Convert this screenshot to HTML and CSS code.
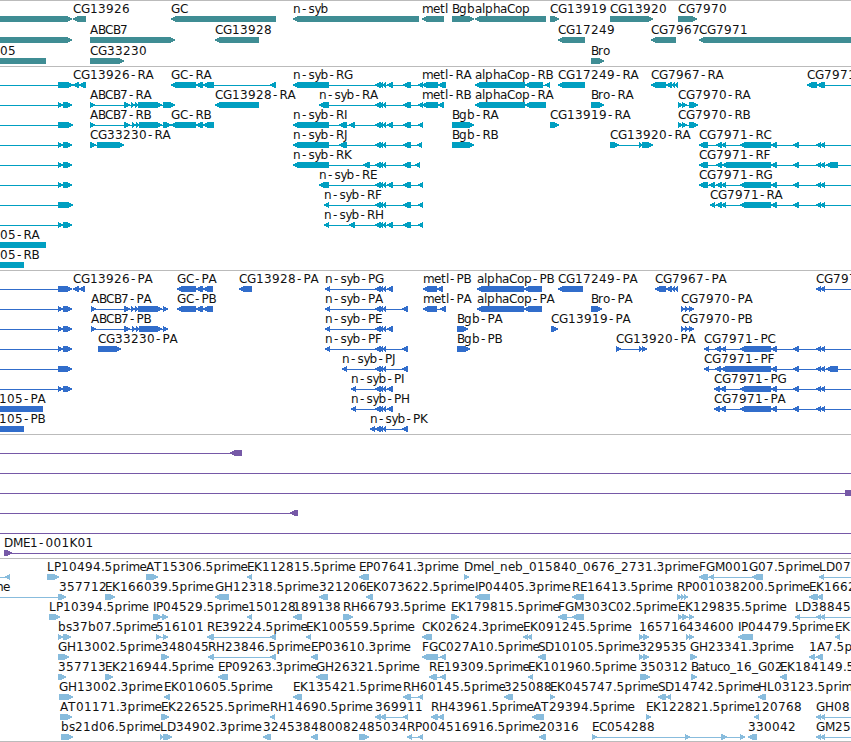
FILE: index.html
```html
<!DOCTYPE html>
<html lang="en">
<head>
  <meta charset="UTF-8">
  <title>Genome Browser</title>
  <link rel="stylesheet" href="styles.css">
</head>
<body>
  <main class="browser">
    <section class="track genes" id="genes"></section>
    <section class="track transcripts" id="transcripts"></section>
    <section class="track proteins" id="proteins"></section>
    <section class="track clones" id="clones"></section>
    <section class="track ests" id="ests"></section>
  </main>
  <script src="tracks.js"></script>
</body>
</html>
```
FILE: styles.css
```css
body {
  margin: 0;
  background: #fff;
  overflow: hidden;
}

.browser {
  display: flex;
  flex-direction: column;
  width: 851px;
  height: 741px;
  border-bottom: 1px solid #bbb;
}

.track {
  border-top: 1px solid #bbb;
  padding: 1px 0 2px;
}

.track svg {
  display: block;
  width: 851px;
  height: 20px;
  overflow: visible;
}

.track text {
  font-family: "DejaVu Sans", sans-serif;
  font-size: 12px;
  fill: #111;
}

.track path {
  shape-rendering: crispEdges;
}

.genes {
  color: #3f8d94;
  padding-top: 0;
}

.genes svg {
  height: 21px;
}

.transcripts {
  color: #009fc1;
}

.proteins {
  color: #316dcb;
}

.clones {
  color: #7659a7;
}

.ests {
  color: #88bcdd;
  padding-bottom: 1px;
}

.shape {
  fill: currentColor;
}
```
FILE: tracks.js
```js
// one string per row, features split by ";"
// feature: label direction exons   ("." = no label, "=" = plain bar, "~" = line only)
const FULL = '. > -20,-10 58,73';
const SPLIT = '. > -20,-10 58,63 63,72';
const CL = '375,381 379,383 382,386';
const CG_END = '771,777 793,799 816,821 820,825';

const tracks = {
  genes: [
    `. > -20,72; CG13926 < 73,86; GC < 171,276; n-syb < 293,419; metl < 422,444; Bgb > 452,474; alphaCop < 475,546; CG13919 > 550,559; CG13920 > 610,653; CG7970 > 678,697`,
    `. > -20,72; ABCB7 > 90,175; CG13928 < 215,259; CG17249 < 558,585; CG7967 < 651,676; CG7971 < 699,870`,
    `05@0 = -20,46; CG33230 > 90,124; Bro > 591,604`
  ],
  transcripts: [
    `${FULL}; CG13926-RA < 73,79 79,86; GC-RA < 171,196 196,203 203,214 270,276; n-syb-RG < 293,329 ${CL} 387,393 403,411 418,423; metl-RA < 422,438 438,446; alphaCop-RB < 475,525 525,543 545,550; CG17249-RA < 558,585; CG7967-RA < 651,666 666,672 671,675 674,678; CG7971-RD < 807,817 817,825 870,880`,
    `${SPLIT}; ABCB7-RA > 90,95 124,130 131,135 135,139 138,162 163,175; CG13928-RA < 215,259; n-syb-RA < 319,329 ${CL} 403,411 418,423; metl-RB < 422,438 438,444; alphaCop-RA < 475,525 525,546; Bro-RA > 591,604; CG7970-RA > 678,683 682,687 689,698`,
    `${FULL}; ABCB7-RB > 90,95 124,130 132,136 136,139 139,162 163,171; GC-RB < 171,196 196,203 203,214; n-syb-RI < 293,329 339,347 349,355 ${CL} 387,393 403,411 418,423; Bgb-RA > 452,474; CG13919-RA > 550,559; CG7970-RB > 678,683 682,687 689,698`,
    `${SPLIT}; CG33230-RA > 90,96 97,124; n-syb-RJ < 293,329 339,347 ${CL} 403,411 417,422; Bgb-RB > 452,474; CG13920-RA > 610,619 639,643 642,653; CG7971-RC < 699,708 716,722 721,726 740,771 ${CG_END} 870,880`,
    `${SPLIT}; n-syb-RK < 293,329 363,370 ${CL} 403,411 415,420; CG7971-RF < 699,708 716,722 722,771 ${CG_END} 826,838 870,880`,
    `${SPLIT}; n-syb-RE < 319,329 ${CL} 387,393 403,411 418,423; CG7971-RG < 699,708 709,715 716,722 721,726 740,771 ${CG_END} 870,880`,
    `${FULL}; n-syb-RF < 324,329 ${CL} 403,411 418,423; CG7971-RA < 710,715 716,722 721,726 740,771 ${CG_END} 870,880`,
    `${SPLIT}; n-syb-RH < 324,329 349,355 ${CL} 387,393 403,411 418,423`,
    `05-RA@0 = -20,46`,
    `05-RB@0 = -20,24`
  ],
  proteins: [
    `. > -20,-10 58,72; CG13926-PA < 73,79 79,85; GC-PA < 177,196 196,203 203,213; CG13928-PA < 239,252; n-syb-PG < 325,330 ${CL} 387,393; metl-PB < 423,437 437,443; alphaCop-PB < 477,524 524,542; CG17249-PA < 558,583; CG7967-PA < 655,666 666,672 671,675 674,678; CG7971-PD < 816,821 820,825 870,880`,
    `${SPLIT}; ABCB7-PA > 91,96 124,130 131,135 135,139 138,162 163,168; GC-PB < 177,196 196,203 203,213; n-syb-PA < 325,330 ${CL} 402,408; metl-PA < 423,437 440,446; alphaCop-PA < 477,524 524,542; Bro-PA > 591,602; CG7970-PA > 681,685 685,689 689,694`,
    `${SPLIT}; ABCB7-PB > 91,96 124,130 132,136 136,139 139,162 163,168; n-syb-PE < 325,330 ${CL} 387,393; Bgb-PA > 457,468; CG13919-PA > 551,558; CG7970-PB > 681,685 685,689 689,694`,
    `${SPLIT}; CG33230-PA > 98,121; n-syb-PF < 325,330 ${CL} 402,408; Bgb-PB > 457,470; CG13920-PA > 616,621 639,643 642,647; CG7971-PC < 704,709 715,721 721,726 740,771 ${CG_END} 870,880`,
    `. > -20,-10 58,72; n-syb-PJ < 342,347 ${CL} 402,408; CG7971-PF < 704,709 715,721 721,771 ${CG_END} 826,838 870,880`,
    `${SPLIT}; n-syb-PI < 351,356 ${CL} 387,393; CG7971-PG < 714,720 720,726 740,771 ${CG_END} 870,880`,
    `105-PA@-1 = -20,43; n-syb-PH < 351,356 ${CL} 387,393; CG7971-PA < 714,720 720,726 740,771 ${CG_END} 870,880`,
    `105-PB@-1 = -20,24; n-syb-PK < 370,375 ${CL} 402,408`
  ],
  clones: [
    `. < -20,-10 230,242`,
    `. ~ 0,851`,
    `. > -20,-10 845,856`,
    `. < -20,-10 290,298`,
    `. ~ 0,851`,
    `DME1-001K01 > 4,12 870,880`
  ],
  ests: [
    `. < -20,-10 5,10; LP10494.5prime > 47,59; AT15306.5prime > 146,158; EK112815.5prime < 247,252; EP07641.3prime < 359,369; Dmel_neb_015840_0676_2731.3prime > 464,469; FGM001G07.5prime < 699,708 709,714 752,763; LD07 < 819,824 870,880`,
    `me@-8 > -20,-10 58,66; 357712@59 ~ 58,59; EK166039.5prime > 105,115; GH12318.5prime < 215,229; 321206 < 319,328; EK073622.5prime < 366,373; IP04405.3prime < 475,490; RE16413.5prime < 572,584; RP001038200.5prime > 677,682 681,685 684,688; EK1662 < 809,818 817,823`,
    `LP10394.5prime > 49,60; IP04529.5prime > 153,162 162,168; 150128@248 < 247,252; 189138 < 293,302; RH66793.5prime > 343,353; EK179815.5prime > 451,459; FGM303C02.5prime < 558,567 572,584; EK129835.5prime > 678,683 682,688 689,694; LD38845 < 795,800 816,821 820,825 870,880`,
    `bs37b07.5prime > 58,63 63,71; 516101 > 156,161 163,168; RE39224.5prime < 207,214 270,276; EK100559.5prime < 306,311; CK02624.3prime < 422,432; EK091245.5prime < 523,528 527,532; 165716 > 639,644 643,649; 434600 > 686,690 689,694; IP04479.5prime < 738,753; EK < 835,840`,
    `GH13002.5prime > 58,69; 348045 > 161,169; RH23846.5prime < 208,214 270,276; EP03610.3prime < 311,318; FGC027A10.5prime < 422,438 440,446; SD10105.5prime < 538,546; 329535 > 639,644 643,649; GH23341.3prime > 690,697; 1A7.5p < 809,815 816,823`,
    `357713 > 58,66; EK216944.5prime > 105,113; EP09263.3prime < 218,228; GH26321.5prime < 316,328; RE19309.5prime < 429,437 440,446; EK101960.5prime < 528,533; 350312 > 640,650; Batuco_16_G02 > 691,697; EK184149.5prime < 780,787`,
    `GH13002.3prime > 59,73; EK010605.5prime < 164,170; EK135421.5prime < 293,302; RH60145.5prime < 403,411 418,423; 325088 < 504,513; EK045747.5prime > 550,555; SD14742.5prime < 658,666 666,671; HL03123.5prime < 758,766`,
    `AT01171.3prime > 60,72; EK226525.5prime > 161,169; RH14690.5prime < 270,275; 369911 < 375,381 380,386 403,408; RH43961.5prime < 431,438 438,444; AT29394.5prime@533 < 532,544; EK122821.5prime > 646,651; 120768 < 754,759; GH08 < 816,821 820,825 870,880`,
    `bs21d06.5prime > 61,73; LD34902.3prime > 160,164 163,172; 324538 < 263,271; 480082 < 311,318; 485034 > 359,369; RP004516916.5prime < 407,412 418,423; 20316 < 539,546; EC054288 > 592,597 685,690 721,727 740,745; 330042 < 748,757; GM25 < 816,821 820,825 870,880`
  ]
};

// advance of each character, digits are all 8
const advance = {
  A: 8, B: 7, C: 8, D: 9, E: 7, F: 7, G: 9, H: 9, I: 3, J: 4, K: 8, L: 7, M: 10, P: 7, R: 8, S: 7, T: 8,
  a: 7, b: 8, c: 6, d: 8, e: 7, g: 8, h: 7, i: 3, l: 3, m: 11, n: 8, o: 7, p: 8, r: 5, s: 6, t: 5, u: 7, y: 6,
  '-': 7.5, '_': 6, '.': 3.5
};

function glyphPositions(label, x) {
  const xs = [];
  for (const ch of label) {
    // centre the hyphen in its cell
    xs.push(ch === '-' ? x + 1 : x);
    x += advance[ch] || 8;
  }
  return xs.join(' ');
}

// all shapes wind the same way so overlapping ones stay filled
function exon(dir, x0, x1, y) {
  const head = Math.min(5, x1 - x0);
  if (dir === '=') return `M${x0} ${y}H${x1}V${y + 6}H${x0}Z`;
  if (dir === '>') {
    const b = x1 - head;
    return `M${x0} ${y}H${b}L${x1} ${y + 2.5}V${y + 3.5}L${b} ${y + 6}H${x0}Z`;
  }
  const b = x0 + head;
  return `M${b} ${y}H${x1}V${y + 6}H${b}L${x0} ${y + 3.5}V${y + 2.5}Z`;
}

Object.keys(tracks).forEach(id => {
  const top = id === 'genes' ? 15 : 14;
  let html = '';
  tracks[id].forEach(row => {
    let shapes = '';
    let labels = '';
    row.split(';').forEach(item => {
      const [name, dir, ...parts] = item.trim().split(' ');
      const exons = parts.map(p => p.split(',').map(Number));
      const start = exons[0][0];
      const end = exons[exons.length - 1][1];
      if (exons.length > 1 || dir === '~') {
        shapes += `M${start} ${top + 3}H${end}V${top + 4}H${start}Z`;
      }
      if (dir !== '~') {
        shapes += exons.map(e => exon(dir, e[0], e[1], top)).join('');
      }
      if (name !== '.') {
        const [label, at] = name.split('@');
        labels += `<text x="${glyphPositions(label, at ? Number(at) : start)}" y="${top - 3}">${label}</text>`;
      }
    });
    html += `<svg><path class="shape" d="${shapes}"/>${labels}</svg>`;
  });
  document.getElementById(id).innerHTML = html;
});
```
